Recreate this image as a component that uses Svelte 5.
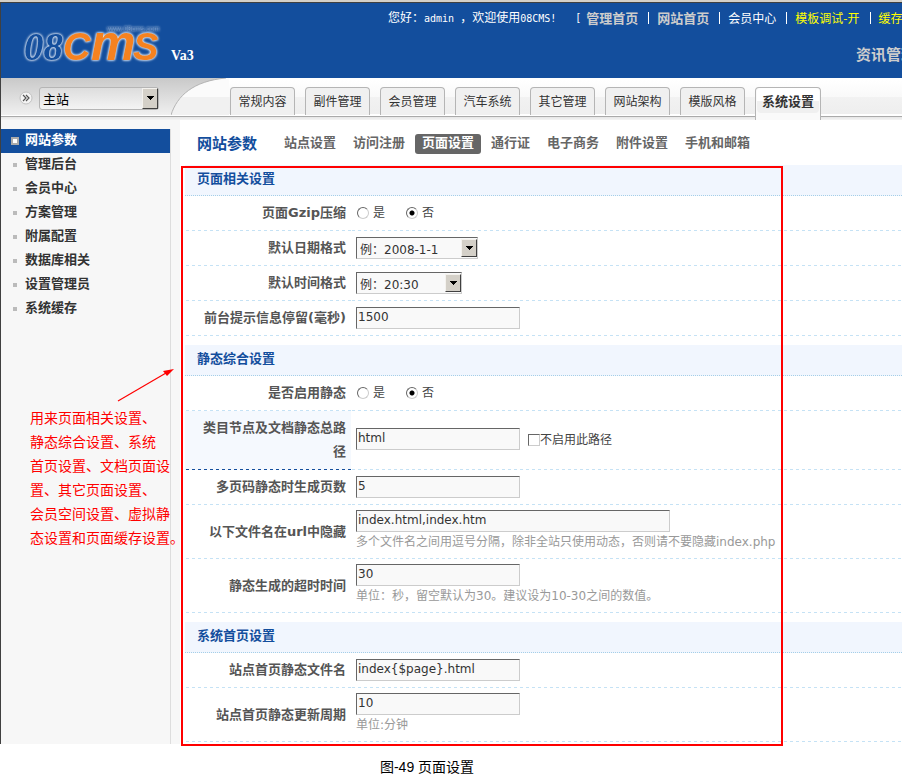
<script>
  const topLinks = [
    { text: '管理首页', kind: 'strong' },
    { text: '网站首页', kind: 'strong' },
    { text: '会员中心', kind: 'plain' },
    { text: '模板调试-开', kind: 'flag' },
    { text: '缓存-开', kind: 'flag' }
  ];
  const tabs = ['常规内容', '副件管理', '会员管理', '汽车系统', '其它管理', '网站架构', '模版风格', '系统设置'];
  const activeTab = '系统设置';
  const menu = ['网站参数', '管理后台', '会员中心', '方案管理', '附属配置', '数据库相关', '设置管理员', '系统缓存'];
  const activeMenu = '网站参数';
  const pages = ['站点设置', '访问注册', '页面设置', '通行证', '电子商务', '附件设置', '手机和邮箱'];
  const activePage = '页面设置';
  const noteLines = [
    '用来页面相关设置、',
    '静态综合设置、系统',
    '首页设置、文档页面设',
    '置、其它页面设置、',
    '会员空间设置、虚拟静',
    '态设置和页面缓存设置。'
  ];
  const sections = [
    {
      title: '页面相关设置',
      rows: [
        { id: 'gzip', label: '页面Gzip压缩', type: 'radio' },
        { id: 'dateformat', label: '默认日期格式', type: 'select', value: '例：2008-1-1', size: 'date' },
        { id: 'timeformat', label: '默认时间格式', type: 'select', value: '例：20:30', size: 'time' },
        { id: 'msgtime', label: '前台提示信息停留(毫秒)', type: 'text', value: '1500' }
      ]
    },
    {
      title: '静态综合设置',
      rows: [
        { id: 'static', label: '是否启用静态', type: 'radio' },
        { id: 'htmldir', label: '类目节点及文档静态总路径', type: 'text', value: 'html', check: '不启用此路径', hot: true },
        { id: 'maxpage', label: '多页码静态时生成页数', type: 'text', value: '5' },
        {
          id: 'hidden',
          label: '以下文件名在url中隐藏',
          type: 'text',
          value: 'index.html,index.htm',
          wide: true,
          hint: '多个文件名之间用逗号分隔，除非全站只使用动态，否则请不要隐藏index.php'
        },
        {
          id: 'timeout',
          label: '静态生成的超时时间',
          type: 'text',
          value: '30',
          hint: '单位：秒，留空默认为30。建议设为10-30之间的数值。'
        }
      ]
    },
    {
      title: '系统首页设置',
      rows: [
        { id: 'indexfile', label: '站点首页静态文件名', type: 'text', value: 'index{$page}.html' },
        { id: 'indexcycle', label: '站点首页静态更新周期', type: 'text', value: '10', hint: '单位:分钟' }
      ]
    }
  ];
</script>

{#snippet dropArrow()}
  <span class="drop" aria-hidden="true">
    <svg width="7" height="4" viewBox="0 0 7 4" shape-rendering="crispEdges"><path d="M0 0h7v1H6v1H5v1H4v1H3V3H2V2H1V1H0z" fill="#000" /></svg>
  </span>
{/snippet}

<div class="page">
  <div class="frame">
    <header>
      <div class="brand">
        <svg class="logo" width="146" height="44" viewBox="0 0 146 44" role="img" aria-label="08CMS">
          <text class="url" x="86" y="10">www.08cms.com</text>
          <text class="num" x="3" y="39">08</text>
          <text class="cap" x="42" y="39">C</text>
          <text class="low" x="70" y="39">m</text>
          <text class="cap" x="112" y="39">S</text>
        </svg>
        <span class="version">Va3</span>
      </div>
      <div class="top">
        <div class="welcome">
          <span>您好：<span class="mono">{'admin '}</span>，欢迎使用<span class="mono">08CMS!</span></span>
          <span class="bracket mono">[</span>
          {#each topLinks as link, i}
            {#if i > 0}<span class="bar"></span>{/if}
            <a href="#top" class={link.kind}>{link.text}</a>
          {/each}
        </div>
        <nav class="modules"><a href="#news">资讯管理</a></nav>
      </div>
    </header>

    <div class="toolbar">
      <div class="switch">
        <svg width="14" height="14" viewBox="0 0 14 14" aria-hidden="true">
          <circle cx="7" cy="7" r="6" fill="#f4f4f4" stroke="#c2c2c2" />
          <path d="M4 4l3 3-3 3M7 4l3 3-3 3" fill="none" stroke="#555" stroke-width="1.2" />
        </svg>
        <span class="picker site">
          <select aria-label="站点"><option>主站</option></select>
          {@render dropArrow()}
        </span>
      </div>
      <svg class="curve" width="58" height="37" viewBox="0 0 58 37" aria-hidden="true">
        <path d="M0 37C6 18 22 3 55 0H58V37z" fill="#fbfbfb" />
        <path d="M0 37C3 29 7 23 11 19H58V37z" fill="#f1f1f1" />
        <path d="M0 37C6 18 22 3 55 0" fill="none" stroke="#b4b4b4" />
      </svg>
      <nav class="tabs">
        {#each tabs as tab}
          <a href="#tab" class:active={tab === activeTab}><span>{tab}</span></a>
        {/each}
      </nav>
    </div>

    <div class="body">
      <aside>
        <ul>
          {#each menu as item}
            <li class:active={item === activeMenu}><a href="#menu">{item}</a></li>
          {/each}
        </ul>
      </aside>
      <main>
        <nav class="pages">
          <h1>网站参数</h1>
          {#each pages as page}
            <a href="#page" class:active={page === activePage}>{page}</a>
          {/each}
        </nav>
        <form>
          {#each sections as section}
            <section>
              <h2>{section.title}</h2>
              {#each section.rows as row}
                <div class="row" class:hot={row.hot}>
                  <div class="name">
                    {#if row.type === 'radio'}<span id={row.id}>{row.label}</span>{:else}<label for={row.id}>{row.label}</label>{/if}
                  </div>
                  <div class="field">
                    {#if row.type === 'radio'}
                      <div class="radios" role="radiogroup" aria-labelledby={row.id}>
                        <label><input type="radio" name={row.id} value="1" />是</label>
                        <label><input type="radio" name={row.id} value="0" checked />否</label>
                      </div>
                    {:else if row.type === 'select'}
                      <span class="picker sunken {row.size}">
                        <select id={row.id}><option>{row.value}</option></select>
                        {@render dropArrow()}
                      </span>
                    {:else}
                      <div class="line">
                        <input id={row.id} class="text" class:wide={row.wide} type="text" value={row.value} />
                        {#if row.check}<label class="check"><input type="checkbox" />{row.check}</label>{/if}
                      </div>
                      {#if row.hint}<p>{row.hint}</p>{/if}
                    {/if}
                  </div>
                </div>
              {/each}
            </section>
          {/each}
        </form>
      </main>

      <div class="outline"></div>
      <div class="note">
        {#each noteLines as line}<div>{line}</div>{/each}
      </div>
      <svg class="arrow" width="60" height="36" viewBox="0 0 60 36" aria-hidden="true">
        <path d="M2 34L50 6" stroke="#f00" stroke-width="1.2" />
        <path d="M58 2L51 9L47 4z" fill="#f00" />
      </svg>
    </div>
  </div>
  <footer>图-49 页面设置</footer>
</div>

<style>
  :global(body) {
    margin: 0;
    background: #fff;
  }
  .page {
    font: 12px/24px 'DejaVu Sans', 'Noto Sans CJK SC', sans-serif;
    color: #444;
    overflow: hidden;
    border-top: 2px solid #d4d0c8;
  }
  .page *,
  .page *::before {
    box-sizing: border-box;
  }
  a {
    color: inherit;
    text-decoration: none;
    white-space: nowrap;
  }
  ul, h1, h2, p {
    margin: 0;
    padding: 0;
    list-style: none;
  }
  .frame {
    border-left: 1px solid #404040;
    border-top: 1px solid #404040;
  }

  header {
    display: flex;
    height: 75px;
    background: #134e9d;
    color: #fff;
    overflow: hidden;
    font-family: 'Noto Sans CJK SC', sans-serif;
  }
  .brand {
    display: flex;
    flex: 0 0 387px;
    padding: 18px 0 0 20px;
  }
  .logo {
    overflow: visible;
    filter: drop-shadow(0 0 1px #dfe8f4) drop-shadow(0 0 1px #dfe8f4);
  }
  .num {
    font: italic bold 39px 'Liberation Serif', serif;
    fill: #134e9d;
  }
  .cap {
    font: italic bold 38px 'Liberation Sans', sans-serif;
    fill: #f58220;
  }
  .low {
    font: italic bold 50px 'Liberation Sans Narrow', 'Liberation Sans', sans-serif;
    fill: #f58220;
  }
  .url {
    font: 7px 'Liberation Sans', sans-serif;
    fill: #134e9d;
    opacity: 0.5;
  }
  .version {
    margin: 23px 0 0 4px;
    font: bold 14px/24px 'Liberation Serif', serif;
  }
  .top {
    flex: 1;
    min-width: 0;
  }
  .welcome {
    display: flex;
    align-items: center;
    height: 24px;
    margin-top: 3px;
    white-space: nowrap;
  }
  .mono {
    font-family: 'DejaVu Sans Mono', monospace;
    font-size: 10px;
    white-space: pre;
  }
  .bracket {
    margin: 0 5px 0 19px;
  }
  .bar {
    flex: none;
    width: 1px;
    height: 12px;
    margin: 0 8px 0 10px;
    background: #fff;
  }
  .strong {
    font-size: 13px;
    font-weight: bold;
    color: #ccc;
  }
  .flag {
    color: #ff0;
  }
  .modules {
    padding: 12px 0 0 468px;
    font-size: 15px;
    font-weight: bold;
    color: #ccc;
  }

  .toolbar {
    display: flex;
    height: 42px;
    background: linear-gradient(#fff 0, #fff 2px, #f9f9f9 19px, #f2f2f2 19px, #eee 36px, #fff 36px, #fff 38px, #aaa 38px, #aaa 39px, #e6e6e6 39px, #f4f4f4 42px);
  }
  .switch {
    display: flex;
    align-items: center;
    gap: 6px;
    flex: 0 0 170px;
    height: 37px;
    padding: 3px 0 0 18px;
    background: linear-gradient(#c9c9c9, #f0f0f0);
  }
  .curve {
    flex: none;
    background: linear-gradient(#c9c9c9, #f0f0f0);
  }
  .tabs {
    display: flex;
    gap: 10px;
    align-items: flex-start;
    padding: 9px 0 0 1px;
    color: #333;
    font-family: 'Noto Sans CJK SC', sans-serif;
  }
  .tabs a {
    width: 65px;
    height: 28px;
    border: 1px solid #b5b5b5;
    border-bottom: 0;
    border-radius: 4px 4px 0 0;
    background: #f0f0f0;
    text-align: center;
    line-height: 26px;
  }
  .tabs .active {
    width: 66px;
    height: 33px;
    padding: 0 1px;
    background: #fafafa;
    font-size: 13px;
    font-weight: bold;
  }
  .tabs .active span {
    display: block;
    height: 25px;
    border-radius: 4px;
    background: linear-gradient(#fff 50%, #f0f0f0 50%);
  }

  .picker {
    position: relative;
    display: flex;
  }
  select {
    appearance: none;
    width: 100%;
    height: 100%;
    margin: 0;
    padding: 0 0 0 3px;
    border: 0;
    border-radius: 0;
    background: transparent;
    color: #333;
    font: inherit;
  }
  .drop {
    position: absolute;
    top: 0;
    right: 0;
    bottom: 0;
    display: flex;
    align-items: center;
    justify-content: center;
    width: 16px;
    border: 1px solid;
    border-color: #f4f2ee #404040 #404040 #f4f2ee;
    background: #d4d0c8;
    pointer-events: none;
  }
  .site {
    width: 120px;
    height: 23px;
    border: 1px solid #b5b5b5;
    border-radius: 3px;
    background: linear-gradient(#ddd, #f4f4f4);
  }
  .site select {
    color: #000;
    font-size: 13px;
  }
  .sunken {
    height: 22px;
    border: 1px solid;
    border-color: #666 #ccc #ccc #666;
    background: #f9f9f9;
  }
  .sunken .drop {
    top: 1px;
    bottom: 1px;
  }
  .date {
    width: 122px;
  }
  .time {
    width: 106px;
  }

  .body {
    position: relative;
    display: flex;
  }
  aside {
    display: flex;
    flex: 0 0 179px;
    padding: 9px 9px 0 0;
    background: #f7f7f7;
  }
  aside ul {
    flex: 1;
    border-right: 1px solid #ddd;
  }
  aside li {
    display: flex;
    align-items: center;
    height: 24px;
    font-size: 13px;
    font-weight: bold;
    line-height: 22px;
    color: #333;
  }
  aside li::before {
    content: '';
    width: 4px;
    height: 4px;
    margin: 0 8px 0 12px;
    background: #bbb;
  }
  aside li a {
    padding-bottom: 2px;
  }
  aside li.active {
    background: #134e9d;
    color: #fff;
  }
  aside li.active::before {
    margin: 0 6px 0 10px;
    border: 2px solid #aaa;
    width: 8px;
    height: 8px;
    background: #fff;
  }

  main {
    flex: 1;
    min-width: 0;
    padding-bottom: 2px;
  }
  .pages {
    display: flex;
    align-items: center;
    gap: 3px;
    height: 45px;
    padding: 3px 0 0 17px;
    font-size: 13px;
    font-weight: bold;
    color: #666;
  }
  h1 {
    margin-right: 17px;
    font-size: 15px;
    color: #134e9d;
  }
  .pages a {
    height: 20px;
    padding: 0 7px;
    border-radius: 3px;
    line-height: 18px;
  }
  .pages .active {
    background: #666;
    color: #fff;
  }

  section {
    margin: 0 0 9px 5px;
  }
  section:last-child {
    margin-bottom: 0;
  }
  h2 {
    height: 31px;
    padding-left: 12px;
    border-bottom: 1px dotted #a5cfe8;
    background: #f1f6fe;
    color: #134e9d;
    font-size: 13px;
    line-height: 28px;
  }
  .row {
    --dash: #c5e2f5;
    display: grid;
    grid-template-columns: 166px 1fr;
  }
  .name,
  .field {
    display: flex;
    padding: 5px 0 6px;
    background: repeating-linear-gradient(90deg, transparent 0 1px, var(--dash) 1px 4px, transparent 4px 6px) bottom / 100% 1px no-repeat;
  }
  .name {
    align-items: center;
    justify-content: flex-end;
    padding-right: 5px;
    font-size: 13px;
    font-weight: bold;
    text-align: right;
    color: #555;
  }
  .name > * {
    max-width: 150px;
  }
  .hot .name {
    --dash: #134e9d;
    background-color: #f5f9fe;
  }
  .field {
    flex-direction: column;
    justify-content: center;
    align-items: flex-start;
    padding-left: 5px;
  }
  .radios {
    display: flex;
    gap: 20px;
  }
  .radios label,
  .check {
    display: flex;
    align-items: center;
  }
  .radios label {
    gap: 4px;
    margin-left: 1px;
  }
  input {
    appearance: none;
    margin: 0;
    padding: 0;
    border: 1px solid;
    border-color: #666 #ccc #ccc #666;
    background: #fff;
  }
  input[type='radio'] {
    width: 12px;
    height: 12px;
    border-radius: 50%;
  }
  input[type='radio']:checked {
    background: radial-gradient(circle, #000 2px, #fff 3px);
  }
  input[type='checkbox'] {
    width: 12px;
    height: 12px;
  }
  .text {
    width: 164px;
    height: 22px;
    padding: 0 1px 2px;
    border-radius: 0;
    background: #f9f9f9;
    color: #333;
    font: inherit;
    line-height: 18px;
  }
  .wide {
    width: 314px;
  }
  .line {
    display: flex;
    gap: 8px;
  }
  p {
    line-height: 21px;
    color: #999;
    white-space: nowrap;
  }

  .outline {
    position: absolute;
    top: 46px;
    bottom: -2px;
    left: 180px;
    width: 602px;
    border: 2px solid #f00;
    pointer-events: none;
  }
  .note {
    position: absolute;
    top: 286px;
    left: 29px;
    font-size: 14px;
    color: #f00;
    white-space: nowrap;
  }
  .arrow {
    position: absolute;
    top: 247px;
    left: 115px;
  }
  footer {
    padding: 11px 48px 0 0;
    font: 14px/24px 'Liberation Sans', 'Noto Sans CJK SC', sans-serif;
    color: #000;
    text-align: center;
  }
</style>
